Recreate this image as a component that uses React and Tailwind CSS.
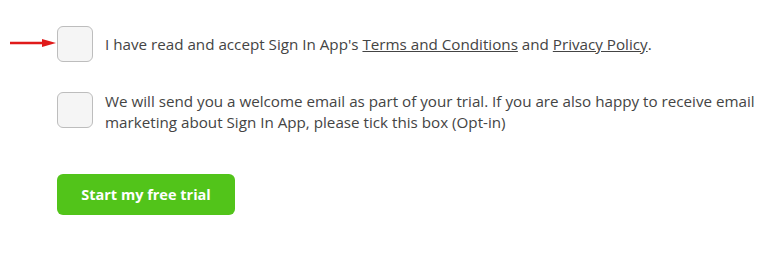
import React from 'react';

function Arrow() {
  return (
    <svg width="48" height="10" viewBox="0 0 48 10" className="absolute left-[-47px] top-[12px]">
      <line x1="0" y1="5" x2="36" y2="5" stroke="#e01a1a" strokeWidth="2.5" />
      <polygon points="32,1 46,5 32,9" fill="#e01a1a" />
    </svg>
  );
}

export default function App() {
  return (
    <div className="w-[783px] h-[263px] bg-white text-[#444] text-[15.2px] leading-[22px]" style={{ fontFamily: '"Open Sans", sans-serif' }}>
      <div className="pl-[57px] pt-[26px]">
        <label className="flex items-center gap-[12px]">
          <span className="relative shrink-0">
            <Arrow />
            <span className="block w-[36px] h-[36px] rounded-[6px] border border-[#bdbdbd] bg-[#f5f5f5]"></span>
          </span>
          <span>
            I have read and accept Sign In App's <a className="underline">Terms and Conditions</a> and <a className="underline">Privacy Policy</a>.
          </span>
        </label>

        <label className="flex items-start gap-[12px] mt-[30px]">
          <span className="block shrink-0 w-[36px] h-[36px] rounded-[6px] border border-[#bdbdbd] bg-[#f5f5f5]"></span>
          <span className="w-[670px] -mt-[1px] leading-[21px]">
            We will send you a welcome email as part of your trial. If you are also happy to receive email marketing about Sign In App, please tick this box (Opt-in)
          </span>
        </label>

        <button className="mt-[41px] w-[178px] h-[41px] rounded-[6px] bg-[#52c41a] text-white font-bold text-[14.5px]">
          Start my free trial
        </button>
      </div>
    </div>
  );
}
